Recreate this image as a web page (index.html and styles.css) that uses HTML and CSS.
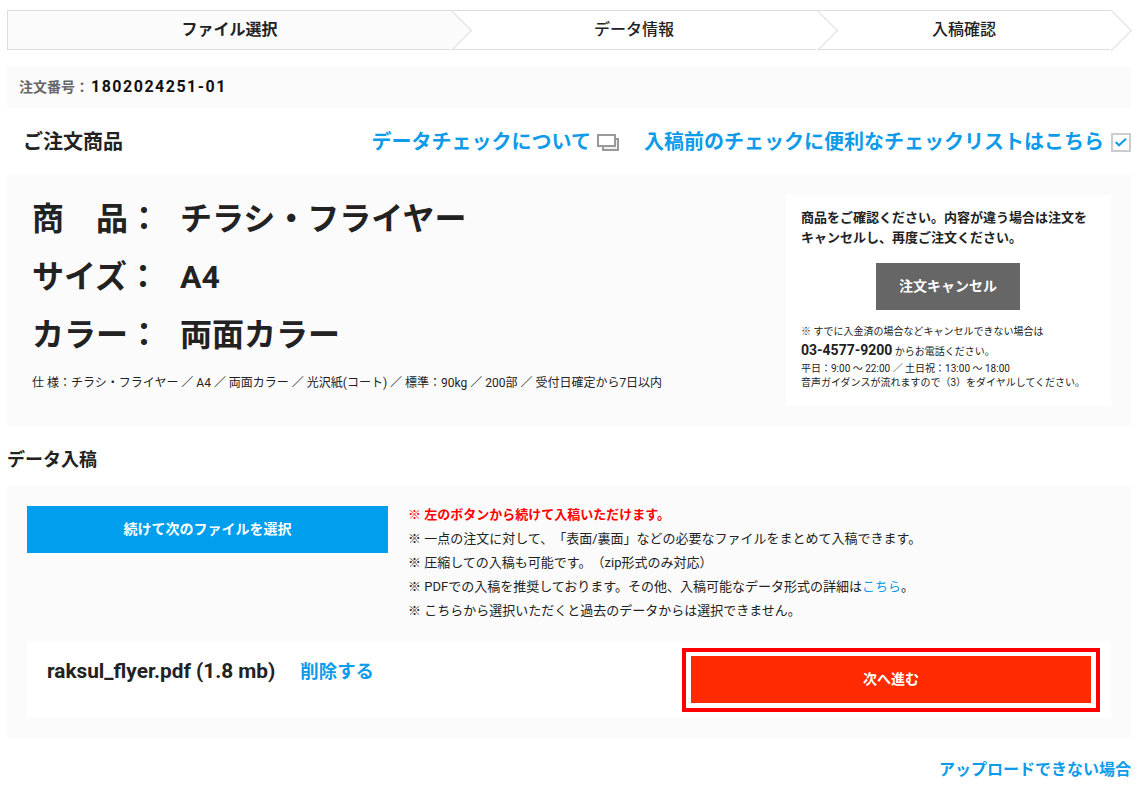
FILE: index.html
```html
<!DOCTYPE html>
<html lang="ja">
<head>
<meta charset="utf-8">
<title>データ入稿</title>
<link rel="stylesheet" href="styles.css">
</head>
<body>
<main class="page">
  <ol class="steps">
    <li class="step step-one is-current">ファイル選択</li>
    <li class="step step-two">データ情報</li>
    <li class="step step-three">入稿確認</li>
  </ol>

  <div class="order-no"><span class="order-label">注文番号：</span><span class="order-value">1802024251-01</span></div>

  <div class="head-row">
    <h2 class="head-title">ご注文商品</h2>
    <div class="head-links">
      <a class="head-link head-link-tight" href="#">データチェックについて
        <svg class="icon-windows" width="22" height="17" viewBox="0 0 22 17" aria-hidden="true"><rect x="6" y="5" width="15" height="11" fill="#f0f0f0" stroke="#999" stroke-width="2"/><rect x="1" y="1" width="17" height="11" fill="#fff" stroke="#999" stroke-width="2"/></svg>
      </a>
      <a class="head-link" href="#">入稿前のチェックに便利なチェックリストはこちら
        <svg class="icon-check" width="20" height="19" viewBox="0 0 20 19" aria-hidden="true"><rect x="1" y="1" width="18" height="17" fill="#fff" stroke="#ccc" stroke-width="2"/><path d="M4.7 9L8 12.3L15 5.7" fill="none" stroke="#0d9bea" stroke-width="2"/></svg>
      </a>
    </div>
  </div>

  <section class="product">
    <div class="product-main">
      <dl class="product-list">
        <div class="product-row"><dt>商　品：</dt><dd>チラシ・フライヤー</dd></div>
        <div class="product-row"><dt>サイズ：</dt><dd>A4</dd></div>
        <div class="product-row"><dt>カラー：</dt><dd>両面カラー</dd></div>
      </dl>
      <p class="spec">仕 様：チラシ・フライヤー ／ A4 ／ 両面カラー ／ 光沢紙(コート) ／ 標準：90kg ／ 200部 ／ 受付日確定から7日以内</p>
    </div>
    <aside class="cancel-box">
      <p class="cancel-lead">商品をご確認ください。内容が違う場合は注文をキャンセルし、再度ご注文ください。</p>
      <a class="cancel-btn" href="#">注文キャンセル</a>
      <p class="cancel-note">※ すでに入金済の場合などキャンセルできない場合は</p>
      <p class="cancel-tel"><strong>03-4577-9200</strong> からお電話ください。</p>
      <p class="cancel-hours">平日：9:00 〜 22:00 ／ 土日祝：13:00 〜 18:00</p>
      <p class="cancel-hours">音声ガイダンスが流れますので（3）をダイヤルしてください。</p>
    </aside>
  </section>

  <h2 class="upload-title">データ入稿</h2>

  <section class="upload">
    <div class="upload-top">
      <a class="select-btn" href="#">続けて次のファイルを選択</a>
      <ul class="notes">
        <li class="note-alert">※ 左のボタンから続けて入稿いただけます。</li>
        <li>※ 一点の注文に対して、「表面/裏面」などの必要なファイルをまとめて入稿できます。</li>
        <li>※ 圧縮しての入稿も可能です。（zip形式のみ対応）</li>
        <li>※ PDFでの入稿を推奨しております。その他、入稿可能なデータ形式の詳細は<a href="#">こちら</a>。</li>
        <li>※ こちらから選択いただくと過去のデータからは選択できません。</li>
      </ul>
    </div>
    <div class="file-row">
      <div class="file-info">
        <span class="file-name">raksul_flyer.pdf (1.8 mb)</span>
        <a class="file-delete" href="#">削除する</a>
      </div>
      <div class="next-frame"><a class="next-btn" href="#">次へ進む</a></div>
    </div>
  </section>

  <div class="help-row"><a class="help-link" href="#">アップロードできない場合</a></div>
</main>
</body>
</html>
```
FILE: styles.css
```css
* { box-sizing: border-box; }
html, body { margin: 0; padding: 0; background: #fff; }
body {
  font-family: Roboto, "Noto Sans CJK JP", sans-serif;
  line-height: 1.4;
  color: #222;
  overflow: hidden;
  text-spacing-trim: space-all;
}
a { color: #0d9bea; text-decoration: none; }
p, h2, ul, ol, dl, dd { margin: 0; padding: 0; }
ul, ol { list-style: none; }

.page { width: 1140px; height: 802px; padding: 10px 9px 0 7px; }

/* steps */
.steps { display: flex; height: 40px; padding-right: 20px; }
.step {
  position: relative;
  display: flex;
  align-items: center;
  justify-content: center;
  height: 40px;
  font-size: 16px;
  font-weight: 500;
  border-top: 1px solid #ddd;
  border-bottom: 1px solid #ddd;
  background: #fff;
}
.step::after {
  content: "";
  position: absolute;
  top: 5px;
  right: -15px;
  width: 28px;
  height: 28px;
  background: inherit;
  border-top: 1px solid #ddd;
  border-right: 1px solid #ddd;
  transform: rotate(45deg);
  z-index: 1;
}
.step-one { width: 444px; border-left: 1px solid #ddd; }
.step-two { width: 366px; }
.step-three { width: 294px; }
.is-current { background: #fbfbfb; font-weight: 700; }

/* order number */
.order-no {
  display: flex;
  align-items: center;
  height: 43px;
  margin-top: 16px;
  padding-left: 12px;
  background: #fbfbfb;
}
.order-label { font-size: 14px; font-weight: 700; color: #666; margin-right: 2px; }
.order-value { font-size: 16px; font-weight: 700; letter-spacing: 1.5px; color: #111; }

/* heading row */
.head-row {
  display: flex;
  align-items: center;
  justify-content: space-between;
  height: 66px;
  padding-left: 16px;
}
.head-title { font-size: 20px; font-weight: 700; }
.head-links { display: flex; align-items: center; gap: 25px; }
.head-link {
  display: flex;
  align-items: center;
  gap: 7px;
  font-size: 20px;
  font-weight: 700;
}
.head-link-tight { gap: 6px; }
.icon-windows, .icon-check { flex: none; }

/* product */
.product {
  display: flex;
  justify-content: space-between;
  height: 251px;
  padding: 20px;
  background: #fbfbfb;
}
.product-main { padding: 0 0 0 5px; }
.product-row {
  display: flex;
  height: 58px;
  line-height: 58px;
  font-size: 32px;
  font-weight: 700;
}
.product-row dt { width: 148px; }
.product-list { margin-top: -5px; }
.spec { margin-top: 10px; font-size: 12px; line-height: 18px; }

.cancel-box { width: 325px; padding: 13px 16px 13px 15px; background: #fff; }
.cancel-lead { font-size: 13px; font-weight: 700; line-height: 20px; }
.cancel-btn {
  display: flex;
  align-items: center;
  justify-content: center;
  width: 144px;
  height: 47px;
  margin: 15px auto 14px;
  background: #666;
  color: #fff;
  font-size: 14px;
  font-weight: 700;
}
.cancel-note { font-size: 10px; line-height: 16px; }
.cancel-tel { font-size: 10px; line-height: 20px; }
.cancel-tel strong { font-size: 14px; font-weight: 700; }
.cancel-hours { font-size: 10px; line-height: 14px; }

/* upload */
.upload-title {
  display: flex;
  align-items: center;
  height: 60px;
  padding-top: 8px;
  font-size: 18px;
  font-weight: 700;
}
.upload { height: 252px; padding: 20px; background: #fbfbfb; }
.upload-top { display: flex; gap: 20px; height: 135px; }
.select-btn {
  display: flex;
  align-items: center;
  justify-content: center;
  flex: none;
  width: 361px;
  height: 47px;
  background: #009fee;
  color: #fff;
  font-size: 14px;
  font-weight: 700;
}
.notes { font-size: 13px; line-height: 24px; margin-top: -3px; }
.note-alert { color: #f00; font-weight: 700; }

.file-row {
  display: flex;
  justify-content: space-between;
  height: 77px;
  padding: 7px 11px 6px 20px;
  background: #fff;
}
.file-info { display: flex; gap: 25px; align-items: center; height: 48px; }
.file-name { font-size: 20.8px; font-weight: 700; }
.file-delete { font-size: 18.4px; font-weight: 700; }
.next-frame { width: 418px; height: 64px; padding: 4px 5px 5px; border: 4px solid #f00; }
.next-btn {
  display: flex;
  align-items: center;
  justify-content: center;
  height: 47px;
  background: #ff2a00;
  color: #fff;
  font-size: 14px;
  font-weight: 700;
}

.help-row { display: flex; justify-content: flex-end; margin-top: 20px; }
.help-link { font-size: 16px; font-weight: 700; line-height: 24px; }
```
